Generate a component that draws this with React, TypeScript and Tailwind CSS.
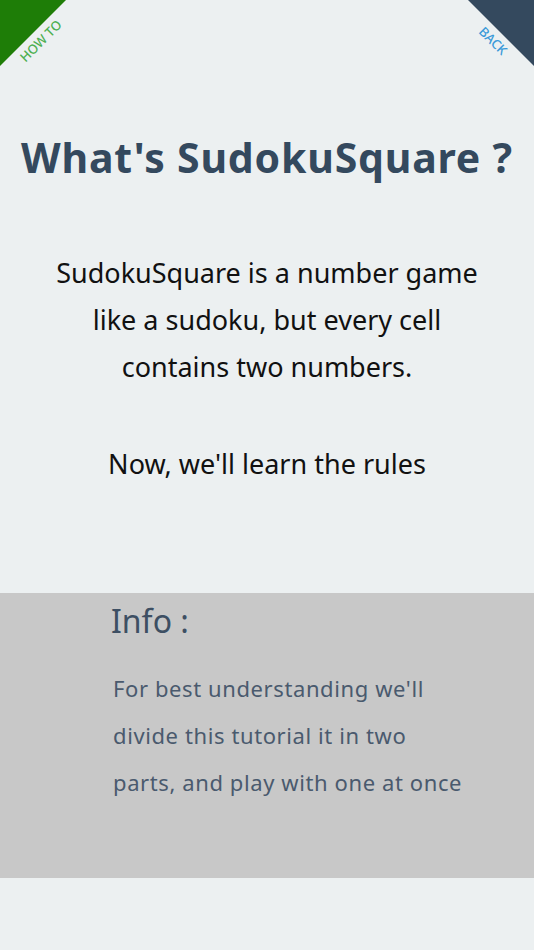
const font = { fontFamily: '"Noto Sans", "Open Sans", sans-serif' };

function CornerLinks() {
  return (
    <>
      <div className="absolute left-0 top-0 h-0 w-0 border-t-[66px] border-r-[66px] border-t-[#1e7d07] border-r-transparent" />
      <a
        href="#"
        className="absolute left-[41px] top-[41px] -translate-x-1/2 -translate-y-1/2 -rotate-45 whitespace-nowrap text-[13px] font-medium leading-none text-[#4caf50]"
      >
        HOW TO
      </a>
      <div className="absolute right-0 top-0 h-0 w-0 border-t-[66px] border-l-[66px] border-t-[#34495e] border-l-transparent" />
      <a
        href="#"
        className="absolute left-[493px] top-[41px] -translate-x-1/2 -translate-y-1/2 rotate-45 whitespace-nowrap text-[13px] font-medium leading-none text-[#3a9ad9]"
      >
        BACK
      </a>
    </>
  );
}

export default function App() {
  return (
    <div className="relative flex min-h-[950px] w-[534px] flex-col bg-[#ecf0f1]" style={font}>
      <CornerLinks />
      <h1 className="mt-[127px] text-center text-[41px] font-bold leading-[60px] tracking-[0.8px] text-[#34495e]">
        What's SudokuSquare ?
      </h1>
      <div className="mt-[62px] flex flex-col items-center text-center text-[27px] leading-[47px] text-[#111]">
        <p>
          SudokuSquare is a number game
          <br />
          like a sudoku, but every cell
          <br />
          contains two numbers.
        </p>
        <p className="mt-[50px]">Now, we'll learn the rules</p>
      </div>
      <section className="mt-[106px] h-[285px] bg-[#c8c8c8] pl-[111px] pt-[4px]">
        <h2 className="text-[32px] leading-[48px] text-[#3d4f63]">Info :</h2>
        <p className="mt-[20px] pl-[2px] text-[22px] leading-[47px] tracking-[0.6px] text-[#4a5a6e]">
          For best understanding we'll
          <br />
          divide this tutorial it in two
          <br />
          parts, and play with one at once
        </p>
      </section>
    </div>
  );
}
